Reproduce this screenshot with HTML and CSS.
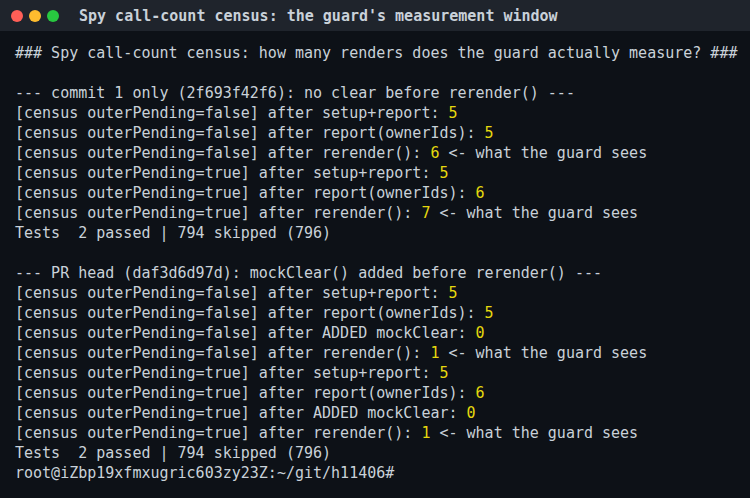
FILE: index.html
```html
<!DOCTYPE html>
<html>
<head>
<meta charset="utf-8">
<link rel="stylesheet" href="styles.css">
</head>
<body>
<div class="window">
  <div class="titlebar">
    <div class="dots">
      <span class="dot red"></span>
      <span class="dot yellow"></span>
      <span class="dot green"></span>
    </div>
    <div class="title">Spy call-count census: the guard's measurement window</div>
  </div>
  <pre class="term">### Spy call-count census: how many renders does the guard actually measure? ###

--- commit 1 only (2f693f42f6): no clear before rerender() ---
[census outerPending=false] after setup+report: <span class="n">5</span>
[census outerPending=false] after report(ownerIds): <span class="n">5</span>
[census outerPending=false] after rerender(): <span class="n">6</span> &lt;- what the guard sees
[census outerPending=true] after setup+report: <span class="n">5</span>
[census outerPending=true] after report(ownerIds): <span class="n">6</span>
[census outerPending=true] after rerender(): <span class="n">7</span> &lt;- what the guard sees
Tests  2 passed | 794 skipped (796)

--- PR head (daf3d6d97d): mockClear() added before rerender() ---
[census outerPending=false] after setup+report: <span class="n">5</span>
[census outerPending=false] after report(ownerIds): <span class="n">5</span>
[census outerPending=false] after ADDED mockClear: <span class="n">0</span>
[census outerPending=false] after rerender(): <span class="n">1</span> &lt;- what the guard sees
[census outerPending=true] after setup+report: <span class="n">5</span>
[census outerPending=true] after report(ownerIds): <span class="n">6</span>
[census outerPending=true] after ADDED mockClear: <span class="n">0</span>
[census outerPending=true] after rerender(): <span class="n">1</span> &lt;- what the guard sees
Tests  2 passed | 794 skipped (796)
root@iZbp19xfmxugric603zy23Z:~/git/h11406#</pre>
</div>
</body>
</html>
```
FILE: styles.css
```css
html, body {
  margin: 0;
  padding: 0;
  background: #0d1117;
}
.window {
  width: 750px;
  height: 498px;
  background: #0d1117;
  overflow: hidden;
  font-family: "DejaVu Sans Mono", monospace;
}
.titlebar {
  height: 31px;
  background: #1f242c;
  display: flex;
  align-items: center;
  padding-left: 11px;
}
.dots {
  display: flex;
  gap: 6px;
}
.dot {
  width: 12px;
  height: 12px;
  border-radius: 50%;
  display: block;
}
.red { background: #ff5f57; }
.yellow { background: #febc2e; }
.green { background: #28c840; }
.title {
  margin-left: 20px;
  color: #c9d1d9;
  font-weight: bold;
  font-size: 15px;
  line-height: 20px;
}
.term {
  margin: 0;
  padding: 12px 15px 0;
  color: #c9d1d9;
  font-family: "DejaVu Sans Mono", monospace;
  font-size: 15px;
  line-height: 20px;
  white-space: pre;
}
.n { color: #e5d80e; }
```
